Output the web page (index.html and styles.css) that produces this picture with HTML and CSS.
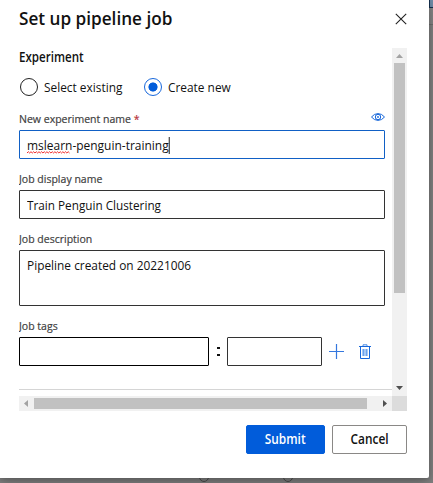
FILE: index.html
```html
<!DOCTYPE html>
<html lang="en">
<head>
<meta charset="utf-8">
<title>Set up pipeline job</title>
<link rel="stylesheet" href="styles.css">
</head>
<body>
<div class="behind">
  <span class="node node-left"></span><span class="node node-right"></span>
  <span class="toolbar"></span>
</div>
<main class="dialog">
  <header class="header">
    <h1 class="title">Set up pipeline job</h1>
    <svg class="close" width="12" height="12" viewBox="0 0 12 12"><path d="M.8.8 11.2 11.2M11.2.8.8 11.2" stroke="#222" stroke-width="1.1"/></svg>
  </header>
  <div class="scroller">
    <form class="form">
      <h2 class="section">Experiment</h2>
      <div class="radios">
        <label class="radio"><span class="dot"></span><span class="text">Select existing</span></label>
        <label class="radio"><span class="dot checked"></span><span class="text">Create new</span></label>
      </div>
      <div class="label name-label"><span class="label-text">New experiment name <span class="required">*</span></span>
        <svg class="eye" width="14" height="8" viewBox="0 0 14 8" fill="none" stroke="#1767db"><path d="M.5 4Q3.2.6 7 .6T13.500 4Q10.800 7.400 7 7.400T.5 4Z"/><circle cx="7" cy="4" r="2.700"/><circle cx="7" cy="4" r=".9" fill="#1767db" stroke="none"/></svg>
      </div>
      <div class="field focused"><span class="text name-value"><span class="misspelled">mslearn<svg class="squiggle" width="49" height="3" viewBox="0 0 49 3"><path d="M0 2 1.500.7 3 2 4.500.7 6 2 7.500.7 9 2 10.500.7 12 2 13.500.7 15 2 16.500.7 18 2 19.500.7 21 2 22.500.7 24 2 25.500.7 27 2 28.500.7 30 2 31.500.7 33 2 34.500.7 36 2 37.500.7 39 2 40.500.7 42 2 43.500.7 45 2 46.500.7 48 2" fill="none" stroke="#f02020"/></svg></span>-penguin-training<span class="caret"></span></span></div>
      <div class="label display-label"><span class="label-text">Job display name</span></div>
      <div class="field"><span class="text display-value">Train Penguin Clustering</span></div>
      <div class="label description-label"><span class="label-text">Job description</span></div>
      <div class="field area"><span class="text">Pipeline created on 20221006</span></div>
      <div class="label tags-label"><span class="label-text">Job tags</span></div>
      <div class="tags">
        <div class="field key"></div><span class="colon"><i></i><i></i></span><div class="field tag-value"></div>
        <svg class="plus" width="15" height="15" viewBox="0 0 15 15"><path d="M0 7.500H15M7.500 0V15" stroke="#3477de" stroke-width="1.200"/></svg>
        <svg class="trash" width="12" height="15" viewBox="0 0 12 15" fill="none"><path d="M0 2.500H12M1.500 2.500V14.500H10.500V2.500" stroke="#1767db"/><path d="M4 2V.8H8V2" stroke="#4a8be5"/><path d="M3 5H9V12H3Z" fill="#a8c9f5"/><path d="M4.500 5V12M7.500 5V12" stroke="#6ca2ec"/></svg>
      </div>
    </form>
    <div class="vbar"><svg width="15" height="15"><path d="M4 10 7.500 6 11 10Z" fill="#a3a3a3"/></svg><span class="vthumb"></span><svg width="15" height="15"><path d="M4 5H11L7.500 9Z" fill="#505050"/></svg></div>
    <div class="hbar"><svg width="15" height="15"><path d="M9 4V11L5 7.500Z" fill="#a3a3a3"/></svg><span class="hthumb"></span><svg width="15" height="15"><path d="M6 4 10 7.500 6 11Z" fill="#505050"/></svg></div>
    <div class="corner"></div>
  </div>
  <footer class="footer">
    <button class="button submit"><span class="button-text">Submit</span></button>
    <button class="button cancel"><span class="button-text">Cancel</span></button>
  </footer>
</main>
</body>
</html>
```
FILE: styles.css
```css
* { box-sizing: border-box; }
body { margin: 0; width: 433px; height: 483px; overflow: hidden; position: relative; background: #818181; color: #111; font-family: "Open Sans", "Noto Sans", sans-serif; }
svg { display: block; flex: none; }
.behind { position: absolute; inset: 0; overflow: hidden; }
.toolbar { position: absolute; right: 0; top: 0; width: 6px; height: 25px; background: #858585; border-bottom: 1px solid #6e6e6e; }
.toolbar::before { content: ""; position: absolute; right: 0; top: 0; width: 3px; height: 7px; border-left: 1px solid #15304f; border-bottom: 1px solid #15304f; background: #6f8ba6; }
.node { position: absolute; top: 472px; width: 10px; height: 10px; border: 1px solid #4b4b4b; border-radius: 50%; }
.node-left { left: 199px; }
.node-right { left: 283px; }
.dialog { position: relative; width: 429px; height: 478px; background: #fff; border-radius: 0 0 2px 0; box-shadow: 0 5px 14px rgba(0,0,0,.26), 0 1px 4px rgba(0,0,0,.13); }
.header { height: 48px; padding: 0 22px 0 19px; display: flex; justify-content: space-between; }
.title { margin: 6px 0 0; font-size: 18px; line-height: 24px; font-weight: 600; white-space: nowrap; transform: scaleX(.953); transform-origin: left; }
.close { margin-top: 13px; }
.scroller { margin-left: 19px; width: 388px; height: 363px; display: grid; grid-template-columns: 373px 15px; grid-template-rows: 348px 15px; }
.form { overflow: hidden; height: 342px; border-bottom: 1px solid #d5d5d5; }
.section { margin: 0; height: 30px; line-height: 18px; font-size: 13.500px; font-weight: 600; transform: scaleX(.858); transform-origin: left; }
.radios { display: flex; height: 18px; padding-left: 1px; }
.radio { display: flex; align-items: center; width: 124px; font-size: 13.500px; line-height: 18px; white-space: nowrap; }
.dot { flex: none; width: 18px; height: 18px; margin-right: 6px; border: 1px solid #222; border-radius: 50%; }
.checked { border-color: #1767db; background: radial-gradient(circle, #015cda 0 4.200px, transparent 4.900px); }
.text, .label-text, .button-text { display: inline-block; transform: scaleX(.88); transform-origin: left; }
.label { width: 366px; font-size: 11.500px; line-height: 16px; font-weight: 500; color: #404040; height: 19px; white-space: nowrap; }
.label-text { transform: scaleX(.915); -webkit-text-stroke: .2px #404040; }
.name-label { display: flex; justify-content: space-between; margin-top: 15px; }
.name-label .eye { margin-top: 2px; }
.required { color: #b6333b; -webkit-text-stroke-color: #b6333b; }
.field { width: 366px; height: 29px; border: 1px solid #333; border-radius: 1px; padding-left: 7px; display: flex; align-items: center; font-size: 13.500px; line-height: 18px; white-space: nowrap; }
.focused { border-color: #1160c5; }
.name-value { transform: scaleX(.886); }
.display-value { transform: scaleX(.87); }
.misspelled { position: relative; }
.squiggle { position: absolute; left: 0; bottom: 0; }
.caret { display: inline-block; width: 1px; height: 17px; background: #000; vertical-align: -4px; }
.display-label, .description-label { margin-top: 12px; }
.area { height: 56px; align-items: flex-start; padding-top: 5px; }
.tags-label { margin-top: 12px; }
.tags { display: flex; align-items: center; }
.key { width: 190px; border-color: #000; }
.tag-value { width: 95px; }
.colon { width: 18px; display: flex; flex-direction: column; align-items: center; gap: 5px; }
.colon i { width: 3px; height: 2px; background: #111; }
.plus { margin-left: 7px; }
.trash { margin-left: 15px; }
.vbar { background: #f1f1f1; }
.vthumb { display: block; width: 11px; height: 230px; margin: 0 2px 88px; background: #c1c1c1; }
.hbar { background: #f1f1f1; display: flex; justify-content: space-between; align-items: center; }
.hthumb { width: 333px; height: 11px; margin-right: 10px; background: #c1c1c1; }
.corner { background: #dcdcdc; }
.footer { padding: 14px 22px 0 0; display: flex; justify-content: flex-end; gap: 7px; }
.button { font: 600 13.500px/18px "Open Sans", sans-serif; height: 29px; padding: 0 0 2px; border-radius: 2px; }
.button-text { transform-origin: center; }
.submit { width: 79px; color: #fff; background: #015cda; border: 1px solid #015cda; }
.cancel { width: 75px; color: #111; background: #fff; border: 1px solid #8a8886; }
```
